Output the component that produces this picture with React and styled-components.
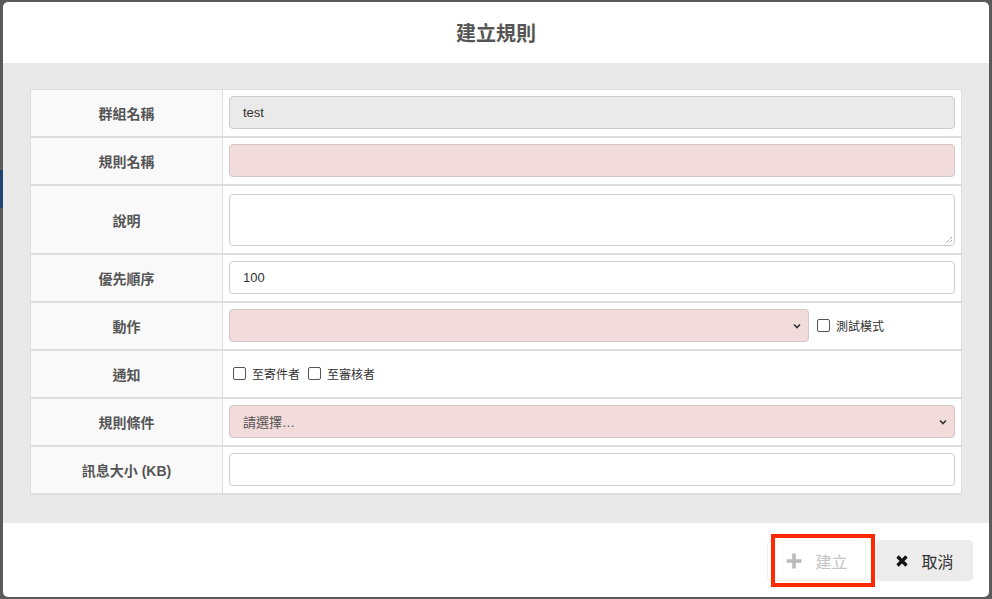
import React from "react"
import styled, { createGlobalStyle } from "styled-components"

const GlobalStyle = createGlobalStyle`
  html, body {
    margin: 0;
    padding: 0;
    background: #5a5a5a;
    font-family: "Liberation Sans", "Noto Sans CJK TC", sans-serif;
  }
  * { box-sizing: border-box; }
`

const Backdrop = styled.div`
  position: relative;
  width: 992px;
  height: 599px;
  padding: 2px 3px 2px 3px;
  background: #5a5a5a;
  overflow: hidden;

  &::before {
    content: "";
    position: absolute;
    left: 0;
    top: 170px;
    width: 3px;
    height: 38px;
    background: #1d4677;
  }
`

const Modal = styled.div`
  display: flex;
  flex-direction: column;
  height: 595px;
  background: #fff;
  border-radius: 5px;
  overflow: hidden;
`

const Header = styled.div`
  height: 61px;
  display: flex;
  align-items: center;
  justify-content: center;
  font-size: 20px;
  font-weight: 700;
  color: #555;
`

const Body = styled.div`
  background: #e9e9e9;
  padding: 26px 27px 28px;
`

const Table = styled.div`
  display: grid;
  grid-template-columns: 192px 1fr;
  background: #fff;
  border: 1px solid #ddd;
  border-bottom: none;
`

const Label = styled.div`
  display: flex;
  align-items: center;
  justify-content: center;
  background: #f9f9f9;
  border-right: 1px solid #ddd;
  border-bottom: 2px solid #ddd;
  font-size: 14px;
  font-weight: 700;
  color: #555;
  min-height: ${(p) => (p.$tall ? "69px" : "48px")};
`

const Value = styled.div`
  display: flex;
  align-items: center;
  gap: 8px;
  padding: 6px 6px 7px 6px;
  border-bottom: 2px solid #ddd;
`

const Input = styled.div`
  flex: 1;
  height: 33px;
  display: flex;
  align-items: center;
  padding: 0 13px;
  border: 1px solid ${(p) => (p.$variant === "white" ? "#ccc" : "#d2c6c6")};
  border-radius: 4px;
  font-size: 13px;
  color: #333;
  background: ${(p) =>
    p.$variant === "disabled" ? "#eaeaea" : p.$variant === "error" ? "#f2dbdb" : "#fff"};
  ${(p) => p.$variant === "disabled" && "border-color: #ccc;"}
`

const TextArea = styled.div`
  position: relative;
  flex: 1;
  height: 52px;
  border: 1px solid #ccc;
  border-radius: 4px;
  background: #fff;
  margin-top: 2px;
`

const Grip = styled.svg`
  position: absolute;
  right: 1px;
  bottom: 1px;
`

const Select = styled(Input)`
  justify-content: space-between;
  padding-right: 6px;
  color: #555;
  ${(p) => p.$width && `flex: 0 0 ${p.$width}px;`}
`

const Check = styled.label`
  display: inline-flex;
  align-items: center;
  gap: 6px;
  font-size: 12px;
  color: #333;
  margin-left: ${(p) => p.$ml || 0}px;
`

const Box = styled.span`
  width: 13px;
  height: 13px;
  border: 1px solid #555;
  border-radius: 2px;
  background: #fff;
`

const Footer = styled.div`
  flex: 1;
  display: flex;
  justify-content: flex-end;
  align-items: flex-start;
  gap: 10px;
  padding: 17px 16px 0 0;
`

const Button = styled.div`
  position: relative;
  display: flex;
  align-items: center;
  justify-content: center;
  gap: 12px;
  height: 41px;
  width: ${(p) => p.$w}px;
  border-radius: 4px;
  font-size: 16px;
  background: ${(p) => (p.$disabled ? "#fff" : "#ececec")};
  border: 1px solid ${(p) => (p.$disabled ? "#f1f1f1" : "#ececec")};
  color: ${(p) => (p.$disabled ? "#c4c4c4" : "#333")};
`

const Highlight = styled.div`
  position: absolute;
  left: 3px;
  top: -7px;
  width: 104px;
  height: 53px;
  border: 4px solid #ff2a00;
`

const Chevron = () => (
  <svg width="10" height="10" viewBox="0 0 10 10">
    <path d="M2 3.5 L5 6.5 L8 3.5" fill="none" stroke="#333" strokeWidth="1.6" />
  </svg>
)

export default function App() {
  return (
    <>
      <GlobalStyle />
      <Backdrop>
        <Modal>
          <Header>建立規則</Header>
          <Body>
            <Table>
              <Label>群組名稱</Label>
              <Value>
                <Input $variant="disabled">test</Input>
              </Value>

              <Label>規則名稱</Label>
              <Value>
                <Input $variant="error" />
              </Value>

              <Label $tall>說明</Label>
              <Value>
                <TextArea>
                  <Grip width="10" height="10" viewBox="0 0 10 10">
                    <path d="M9 3 L3 9 M9 6 L6 9" stroke="#777" strokeWidth="1" strokeDasharray="1 1" />
                  </Grip>
                </TextArea>
              </Value>

              <Label>優先順序</Label>
              <Value>
                <Input $variant="white">100</Input>
              </Value>

              <Label>動作</Label>
              <Value>
                <Select $variant="error" $width={580}>
                  <span />
                  <Chevron />
                </Select>
                <Check>
                  <Box />
                  測試模式
                </Check>
              </Value>

              <Label>通知</Label>
              <Value>
                <Check $ml={4}>
                  <Box />
                  至寄件者
                </Check>
                <Check>
                  <Box />
                  至審核者
                </Check>
              </Value>

              <Label>規則條件</Label>
              <Value>
                <Select $variant="error">
                  <span>請選擇…</span>
                  <Chevron />
                </Select>
              </Value>

              <Label>訊息大小 (KB)</Label>
              <Value>
                <Input $variant="white" />
              </Value>
            </Table>
          </Body>
          <Footer>
            <Button $disabled $w={99}>
              <svg width="18" height="18" viewBox="0 0 18 18">
                <path d="M9 1.5 V16.5 M1.5 9 H16.5" stroke="#bbb" strokeWidth="3.6" />
              </svg>
              建立
              <Highlight />
            </Button>
            <Button $w={97}>
              <svg width="14" height="14" viewBox="0 0 14 14">
                <path d="M2.5 2.5 L11.5 11.5 M11.5 2.5 L2.5 11.5" stroke="#111" strokeWidth="3.2" />
              </svg>
              取消
            </Button>
          </Footer>
        </Modal>
      </Backdrop>
    </>
  )
}
